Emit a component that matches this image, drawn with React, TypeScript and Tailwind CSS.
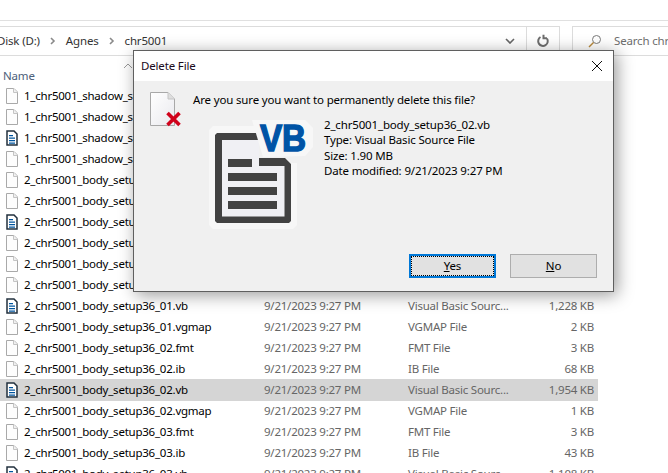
import React from 'react'

type Kind = 'blank' | 'vb'

interface IRow {
	name: string
	type: string
	size: string
	kind: Kind
	selected?: boolean
}

const rows: IRow[] = [
	{ name: '1_chr5001_shadow_setup36_01.fmt', type: 'FMT File', size: '3 KB', kind: 'blank' },
	{ name: '1_chr5001_shadow_setup36_01.ib', type: 'IB File', size: '68 KB', kind: 'blank' },
	{ name: '1_chr5001_shadow_setup36_01.vb', type: 'Visual Basic Sourc...', size: '1,228 KB', kind: 'vb' },
	{ name: '1_chr5001_shadow_setup36_01.vgmap', type: 'VGMAP File', size: '2 KB', kind: 'blank' },
	{ name: '2_chr5001_body_setup36_00.fmt', type: 'FMT File', size: '3 KB', kind: 'blank' },
	{ name: '2_chr5001_body_setup36_00.ib', type: 'IB File', size: '43 KB', kind: 'blank' },
	{ name: '2_chr5001_body_setup36_00.vb', type: 'Visual Basic Sourc...', size: '1,108 KB', kind: 'vb' },
	{ name: '2_chr5001_body_setup36_00.vgmap', type: 'VGMAP File', size: '1 KB', kind: 'blank' },
	{ name: '2_chr5001_body_setup36_01.fmt', type: 'FMT File', size: '3 KB', kind: 'blank' },
	{ name: '2_chr5001_body_setup36_01.ib', type: 'IB File', size: '68 KB', kind: 'blank' },
	{ name: '2_chr5001_body_setup36_01.vb', type: 'Visual Basic Sourc...', size: '1,228 KB', kind: 'vb' },
	{ name: '2_chr5001_body_setup36_01.vgmap', type: 'VGMAP File', size: '2 KB', kind: 'blank' },
	{ name: '2_chr5001_body_setup36_02.fmt', type: 'FMT File', size: '3 KB', kind: 'blank' },
	{ name: '2_chr5001_body_setup36_02.ib', type: 'IB File', size: '68 KB', kind: 'blank' },
	{ name: '2_chr5001_body_setup36_02.vb', type: 'Visual Basic Sourc...', size: '1,954 KB', kind: 'vb', selected: true },
	{ name: '2_chr5001_body_setup36_02.vgmap', type: 'VGMAP File', size: '1 KB', kind: 'blank' },
	{ name: '2_chr5001_body_setup36_03.fmt', type: 'FMT File', size: '3 KB', kind: 'blank' },
	{ name: '2_chr5001_body_setup36_03.ib', type: 'IB File', size: '43 KB', kind: 'blank' },
	{ name: '2_chr5001_body_setup36_03.vb', type: 'Visual Basic Sourc...', size: '1,108 KB', kind: 'vb' },
]

const BlankFile = () => (
	<svg width="12" height="16" viewBox="0 0 12 16" className="shrink-0">
		<path d="M0.5 0.5H8L11.5 4V15.5H0.5Z" fill="#fdfdfd" stroke="#a9a9a9" />
		<path d="M7.5 0.5V4.5H11.5" fill="#f0f0f0" stroke="#c4c4c4" />
	</svg>
)

const VbFile = () => (
	<svg width="12" height="16" viewBox="0 0 12 16" className="shrink-0">
		<path d="M1 1H8L11 4V15H1Z" fill="#fff" stroke="#22303e" strokeWidth="1.5" />
		<path d="M3 5H7V6.2H3ZM3 7.5H9V8.7H3ZM3 10H9V11.2H3ZM3 12.5H9V13.7H3Z" fill="#00559f" />
	</svg>
)

const Chevron = () => (
	<svg width="6" height="8" viewBox="0 0 6 8" className="shrink-0">
		<path d="M1 1L4 4L1 7" fill="none" stroke="#8a8a8a" strokeWidth="1.6" />
	</svg>
)

const DeleteIcon = () => (
	<svg width="32" height="36" viewBox="0 0 32 36" className="shrink-0">
		<defs>
			<linearGradient id="sheet" x1="0" y1="0" x2="1" y2="1">
				<stop offset="0" stopColor="#ffffff" />
				<stop offset="1" stopColor="#e9e9ee" />
			</linearGradient>
		</defs>
		<path d="M0.5 0.5H18L24.5 7V33.5H0.5Z" fill="url(#sheet)" stroke="#a8a8a8" />
		<path d="M18 0.5V7H24.5" fill="#dedede" stroke="#c4c4c4" />
		<path d="M17.5 21L29.5 33M29.5 21L17.5 33" fill="none" stroke="#d0021b" strokeWidth="3.6" />
	</svg>
)

const VbDocIcon = () => (
	<svg width="106" height="113" viewBox="0 -8 106 113" className="shrink-0">
		{/* pale halo round the sheet */}
		<path d="M4 1H50V38H88V100L84 104H4L0 100V5Z" fill="#f7f7f7" />
		{/* sheet */}
		<path d="M13 15H50V41H75.5V91.5H13Z" fill="#f0f0f4" />
		<path
			fillRule="evenodd"
			d="M8 8H50V33H76L82 39V96L80 98H8L6 96V10ZM13 15V91.5H75.5V41H50V15Z"
			fill="#424242"
		/>
		<path d="M19 34H43V42H19ZM19 48H68V56H19ZM19 62H68V70H19ZM19 76H68V84H19Z" fill="#424242" />
		{/* VB badge */}
		<path d="M43 -5H96L104 3V22L96 31L54 32Z" fill="#f7f7f7" />
		<text
			x="51"
			y="26"
			fontFamily="'Liberation Sans', sans-serif"
			fontWeight="700"
			fontSize="36"
			textLength="46"
			lengthAdjust="spacingAndGlyphs"
			fill="#0054a6"
			stroke="#0054a6"
			strokeWidth="1.4"
		>
			VB
		</text>
	</svg>
)

const Row: React.FC<{ row: IRow }> = ({ row }) => (
	<div
		className={`flex items-center w-[598px] pl-[6px] pr-1 tracking-[-0.23px] ${
			row.selected ? 'h-[22px] -mb-px bg-[#d5d5d5]' : 'h-[21px]'
		}`}
	>
		{row.kind === 'vb' ? <VbFile /> : <BlankFile />}
		<span className="w-[246px] pl-[6px] whitespace-nowrap overflow-hidden text-black">{row.name}</span>
		<span className="w-[144px] text-[#666] whitespace-nowrap">9/21/2023 9:27 PM</span>
		<span className="w-[118px] text-[#666] whitespace-nowrap">{row.type}</span>
		<span className="flex-1 text-right text-[#666] whitespace-nowrap">{row.size}</span>
	</div>
)

const App: React.FC = () => {
	return (
		<div className="relative w-[668px] h-[473px] overflow-hidden bg-white font-['Noto_Sans',sans-serif] text-[11.5px] leading-[16px] tracking-[-0.17px] text-black">
			{/* Explorer toolbar */}
			<div className="h-[21px] border-b border-[#e0e0e0]" />
			<div className="flex h-[30px] mt-[5px]">
				<div className="flex items-center gap-[10px] w-[530px] h-[30px] border-y border-r border-[#dcdcdc] -ml-[3px] text-[#333]">
					<span>Disk (D:)</span>
					<Chevron />
					<span>Agnes</span>
					<Chevron />
					<span>chr5001</span>
					<svg width="10" height="6" viewBox="0 0 10 6" className="ml-auto mr-[11px]">
						<path d="M1 1L5 5L9 1" fill="none" stroke="#666" strokeWidth="1.6" />
					</svg>
				</div>
				<div className="flex items-center justify-center w-[33px] h-[30px] border-y border-r border-[#dcdcdc]">
					<svg width="14" height="14" viewBox="0 0 14 14">
						<path d="M11 4.5A4.8 4.8 0 1 1 4.5 3M7.5 0.8V4.2H11" fill="none" stroke="#6e6e6e" strokeWidth="2" />
					</svg>
				</div>
				<div className="flex items-center gap-[12px] ml-[12px] flex-1 h-[30px] pl-[15px] border-y border-l border-[#dcdcdc] text-[#6d6d6d] whitespace-nowrap overflow-hidden">
					<svg width="14" height="14" viewBox="0 0 14 14" className="shrink-0">
						<circle cx="8.5" cy="5.5" r="4" fill="none" stroke="#7a7a7a" />
						<path d="M5.5 8.5L1 13" stroke="#b98a3c" strokeWidth="1.4" />
					</svg>
					<span>Search chr5001</span>
				</div>
			</div>

			{/* Column header */}
			<div className="relative h-[29px] pl-[3px] pt-[12px] text-[#4c607a]">
				Name
				<svg width="10" height="6" viewBox="0 0 10 6" className="absolute left-[123px] top-[7px]">
					<path d="M1 5L5 1L9 5" fill="none" stroke="#9a9a9a" />
				</svg>
			</div>

			{/* File list */}
			<div className="flex flex-col">
				{rows.map((row) => (
					<Row key={row.name} row={row} />
				))}
			</div>

			{/* Delete File dialog */}
			<div className="absolute left-[133px] top-[50px] w-[481px] h-[242px] flex flex-col bg-[#f0f0f0] border border-[#5f5f5f] shadow-[3px_3px_16px_rgba(0,0,0,0.4)] tracking-[-0.16px]">
				<div className="flex items-center justify-between h-[30px] shrink-0 bg-white pl-[7px] pr-[10px] text-[#1a0a1a]">
					<span>Delete File</span>
					<svg width="12" height="12" viewBox="0 0 12 12">
						<path d="M1 1L11 11M11 1L1 11" fill="none" stroke="#111" strokeWidth="1" />
					</svg>
				</div>
				<div className="flex flex-1 flex-col pl-[16px] pt-[11px]">
					<div className="flex items-start h-[25px]">
						<DeleteIcon />
						<span className="ml-[11px]">Are you sure you want to permanently delete this file?</span>
					</div>
					<div className="flex items-start ml-[59px]">
						<VbDocIcon />
						<div className="ml-[9px] flex flex-col leading-[15.3px]">
							<span>2_chr5001_body_setup36_02.vb</span>
							<span>Type: Visual Basic Source File</span>
							<span>Size: 1.90 MB</span>
							<span>Date modified: 9/21/2023 9:27 PM</span>
						</div>
					</div>
					<div className="flex justify-end gap-[14px] mt-auto mb-[13px] mr-[16px]">
						<button className="flex items-center justify-center w-[87px] h-[24px] bg-[#e1e1e1] border-2 border-[#0078d7] outline-dotted outline-1 outline-black -outline-offset-3 text-black">
							<span>
								<u>Y</u>es
							</span>
						</button>
						<button className="flex items-center justify-center w-[87px] h-[24px] bg-[#e1e1e1] border border-[#adadad] text-black">
							<span>
								<u>N</u>o
							</span>
						</button>
					</div>
				</div>
			</div>
		</div>
	)
}

export default App
